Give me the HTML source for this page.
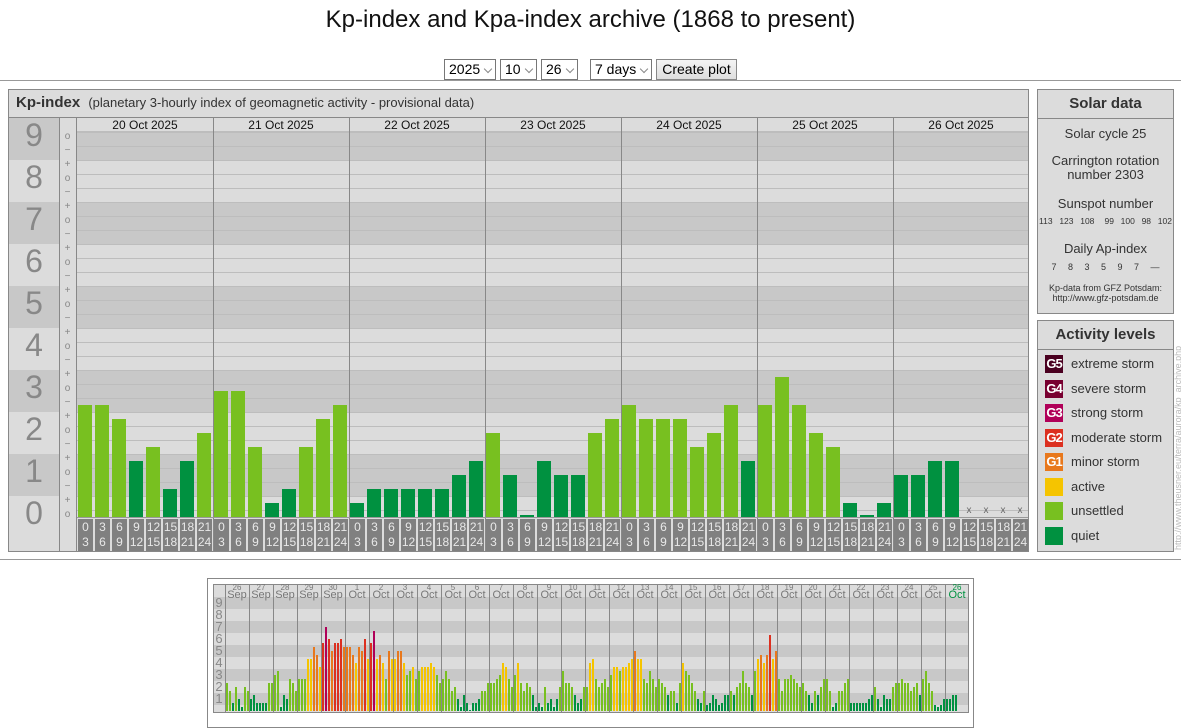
<!DOCTYPE html>
<html><head><meta charset="utf-8"><style>
*{margin:0;padding:0;box-sizing:border-box}
body{width:1181px;height:717px;overflow:hidden;background:#fff;font-family:"Liberation Sans",sans-serif;position:relative;color:#333}
.a{position:absolute}
.t{position:absolute;white-space:nowrap}
.sel{position:absolute;top:59px;height:21px;border:1px solid #777;font-size:14px;line-height:19px;padding-left:4px;color:#000;white-space:nowrap;background:#fff}
.sel i{position:absolute;right:4px;top:6px;width:6px;height:6px;border-right:1px solid #888;border-bottom:1px solid #888;transform:rotate(45deg)}
</style></head><body>
<div class="t" style="left:0;width:1181px;top:6px;text-align:center;font-size:24px;color:#111">Kp-index and Kpa-index archive (1868 to present)</div>
<div class="sel" style="left:444px;width:52px">2025<i></i></div>
<div class="sel" style="left:500px;width:37px">10<i></i></div>
<div class="sel" style="left:541px;width:37px">26<i></i></div>
<div class="sel" style="left:590px;width:62px">7 days<i></i></div>
<div class="a" style="left:656px;top:59px;width:81px;height:21px;border:1px solid #888;background:linear-gradient(#f4f4f4,#dedede);font-size:14px;line-height:19px;text-align:center;color:#000;white-space:nowrap">Create plot</div>
<div class="a" style="left:0;top:80px;width:1181px;height:1px;background:#999"></div>
<div class="a" style="left:0;top:559px;width:1181px;height:1px;background:#999"></div>
<div id="main"></div>
<div class="a" style="left:1037px;top:89px;width:137px;height:225px;background:#dcdcdc;border:1px solid #888">
<div style="height:29px;border-bottom:1px solid #888;text-align:center;font-weight:bold;font-size:15px;line-height:28px;color:#333">Solar data</div>
<div class="t" style="left:0;width:135px;text-align:center;top:36px;font-size:13px">Solar cycle 25</div>
<div class="t" style="left:0;width:135px;text-align:center;top:64px;font-size:13px;line-height:14px">Carrington rotation<br>number 2303</div>
<div class="t" style="left:0;width:135px;text-align:center;top:106px;font-size:13px">Sunspot number</div>
<div class="t" style="left:0;width:135px;text-align:center;top:126px;font-size:8.5px;word-spacing:1px">113 &nbsp;123 &nbsp;108 &nbsp; 99 &nbsp;100 &nbsp;98 &nbsp;102</div>
<div class="t" style="left:0;width:135px;text-align:center;top:151px;font-size:13px">Daily Ap-index</div>
<div class="t" style="left:0;width:135px;text-align:center;top:172px;font-size:9px;word-spacing:9px">7 8 3 5 9 7 —</div>
<div class="t" style="left:0;width:135px;text-align:center;top:193px;font-size:9px;line-height:10px">Kp-data from GFZ Potsdam:<br>http://www.gfz-potsdam.de</div>
</div>
<div class="a" style="left:1037px;top:320px;width:137px;height:232px;background:#dcdcdc;border:1px solid #888">
<div style="height:29px;border-bottom:1px solid #888;text-align:center;font-weight:bold;font-size:15px;line-height:28px;color:#333">Activity levels</div>
<div id="leg"></div>
</div>
<div class="t" style="left:1173px;top:550px;font-size:9px;color:#bbb;transform:rotate(-90deg);transform-origin:0 0">http://www.theusner.eu/terra/aurora/kp_archive.php</div>
<script>
(function(){
var C={q:'#009140',u:'#78c020',a:'#f5c400',g1:'#e8781c',g2:'#dc3020',g3:'#b00058',g4:'#780030',g5:'#4a0020'};
function col(v){if(v>=6.6)return C.g3;if(v>=5.6)return C.g2;if(v>=4.6)return C.g1;if(v>=3.6)return C.a;if(v>=1.6)return C.u;return C.q;}
var h='';
function box(l,t,w,hh,bg,ex){h+='<div class="a" style="left:'+l+'px;top:'+t+'px;width:'+w+'px;height:'+hh+'px;background:'+bg+';'+(ex||'')+'"></div>';}
function txt(l,t,w,s,fs,c,ex){h+='<div class="t" style="left:'+l+'px;top:'+t+'px;width:'+w+'px;text-align:center;font-size:'+fs+'px;color:'+c+';'+(ex||'')+'">'+s+'</div>';}
box(8,89,1021,463,'#dcdcdc','border:1px solid #888');
h+='<div class="t" style="left:16px;top:94px;font-size:15px;font-weight:bold;color:#333">Kp-index <span style="font-weight:normal;font-size:13px;margin-left:4px">(planetary 3-hourly index of geomagnetic activity - provisional data)</span></div>';
box(9,117,1019,1,'#888');
var Z=517,k,tp,bt;
for(k=0;k<=9;k++){tp=Z-42*k-21;bt=Z-42*k+21;if(k==9)tp=118;if(k==0)bt=551;
 var dark=(k%2==1);
 box(9,tp,50,bt-tp,dark?'#c8c8c8':'#dcdcdc');
 var pt=Math.max(tp,131),pb=Math.min(bt,517);
 box(77,pt,951,pb-pt,dark?'#c8c8c8':'#dcdcdc');
 txt(9,Z-42*k-22,50,k,32,'#888');
}
for(var j=0;j<28;j++){var y=Z-14*j-7;if(y>131)box(77,y,951,1,'#bdbdbd');}
box(59,117,1,434,'#888');box(76,117,1,434,'#888');box(77,131,951,1,'#bdbdbd');
for(k=0;k<=9;k++){[['o',0],['+',1],['\u2212',-1]].forEach(function(p){var v=k*3+p[1];if(v<0||v>27)return;var y=Z-14*v;txt(59,y-8,17,p[0],10,'#888');});}
var days=['20 Oct 2025','21 Oct 2025','22 Oct 2025','23 Oct 2025','24 Oct 2025','25 Oct 2025','26 Oct 2025'];
var D=[[8,8,7,4,5,2,4,6],[9,9,5,1,2,5,7,8],[1,2,2,2,2,2,3,4],[6,3,0.15,4,3,3,6,7],[8,7,7,7,5,6,8,4],[8,10,8,6,5,1,0.15,1],[3,3,4,4,-1,-1,-1,-1]];
var hrs=['0<br>3','3<br>6','6<br>9','9<br>12','12<br>15','15<br>18','18<br>21','21<br>24'];
for(var d=0;d<7;d++){var x0=77+136*d;
 txt(x0,118,136,days[d],12,'#111');
 for(var i=0;i<8;i++){var x=x0+17*i+1,v=D[d][i];
  if(v>=0){var hh=Math.round(v*14);box(x,Z-hh,14,hh,v<=4?C.q:C.u);}else txt(x,505,14,'x',10,'#666');
  box(x,519,15,32,'#808080');txt(x,520,15,hrs[i],12,'#e8e8e8','line-height:15px');
 }
 if(d>0)box(x0,117,1,434,'#888');
}
box(77,517,951,1,'#999');
var L=[['G5',C.g5,'extreme storm'],['G4',C.g4,'severe storm'],['G3',C.g3,'strong storm'],['G2',C.g2,'moderate storm'],['G1',C.g1,'minor storm'],['',C.a,'active'],['',C.u,'unsettled'],['',C.q,'quiet']];
var lh='';L.forEach(function(p,i){var y=34+i*24.5;lh+='<div class="a" style="left:7px;top:'+y+'px;width:18px;height:18px;background:'+p[1]+';color:#fff;font-size:13px;line-height:18px;text-align:center;font-weight:bold;letter-spacing:-1px">'+p[0]+'</div><div class="t" style="left:33px;top:'+(y+1)+'px;font-size:13px;color:#333">'+p[2]+'</div>';});
document.getElementById('leg').innerHTML=lh;
box(207,578,767,150,'#fff','border:1px solid #888');
box(213,584,756,129,'#dcdcdc','border:1px solid #888');
var M=711;
for(k=0;k<=9;k++){tp=M-12*k-6;bt=M-12*k+6;if(k==9)tp=597;if(k==0)bt=712;
 if(k%2==1)box(214,tp,754,bt-tp,'#c8c8c8');
 if(k>0)txt(213,M-12*k-8,12,k,13,'#888');}
box(225,584,1,128,'#888');
var md=[[2.3,1.7,0.7,2,1,0.3,2,1.7],[1,1.3,0.7,0.7,0.7,0.7,2.3,2.3],[3,3.3,0.3,1.3,1,2.7,2.3,1.7],[2.7,2.7,2.7,4.3,4.3,5.3,4.7,3.7],[5.7,7,6,5,5.7,5.7,6,5.3],[5.3,5.3,4.7,4,5.3,5,6,4.3],[5.7,6.7,4.3,4.7,4,2.7,5,4.3],[4.3,5,5,4,3,3.3,3.7,2.7],[3.3,3.7,3.7,3.7,4,3.7,3,2.3],[2.7,3.3,2.7,1.7,2,1,0.3,1.3],[0.7,0.1,0.7,0.7,1,1.7,1.7,2.3],[2.3,2.3,2.7,3,4,3.7,2.7,2],[3,4,2.3,1.7,2.3,2,1.3,0.3],[0.7,0.3,2,0.7,1,0.3,1,2],[3.3,2.3,2.3,2,1.3,0.7,1,2],[2,4,4.3,2.7,2,2.3,2.7,2],[3,3.7,3.7,3.3,3.7,3.7,4,4.3],[5,4.3,4.3,2.7,2.3,3.3,2.7,2],[2.7,2.3,2,1.3,1.7,1.7,0.7,2.3],[4,3.3,3,2.3,1.7,1,0.7,1.7],[0.5,0.7,1.3,1,0.5,0.7,1.3,1.3],[1.7,1.3,2,2.3,3.3,2.3,2,1.3],[3.3,4.3,4.7,4,4.7,6.3,4.3,5],[2.7,1.7,2.7,2.7,3,2.7,2.3,2],[2.3,1.7,1.3,0.7,1.7,1.3,2,2.7],[2.7,1.7,0.3,0.7,1.7,1.7,2.3,2.7],[0.7,0.7,0.7,0.7,0.7,0.7,1,1.3],[2,1,0.3,1.3,1,1,2,2.3],[2.3,2.7,2.3,2.3,1.7,2,2.3,1.3],[2.7,3.3,2.3,1.7,0.5,0.3,0.5,1],[1,1,1.3,1.3]];
var lab=[];for(var i=26;i<=30;i++)lab.push([i,'Sep']);for(var i=1;i<=26;i++)lab.push([i,'Oct']);
for(var d=0;d<31;d++){var x0=225+24*d;
 if(d>0)box(x0,584,1,128,'#888');
 var c=d==30?'#009140':'#777';
 txt(x0,584,24,lab[d][0],8,c,'line-height:8px');txt(x0,590,24,lab[d][1],11,c,'line-height:11px');
 md[d].forEach(function(v,i){var hh=Math.round(v*12);box(x0+1+3*i,M-hh,2,hh,col(v));});
}
document.getElementById('main').innerHTML=h;
})();
</script>
</body></html>
